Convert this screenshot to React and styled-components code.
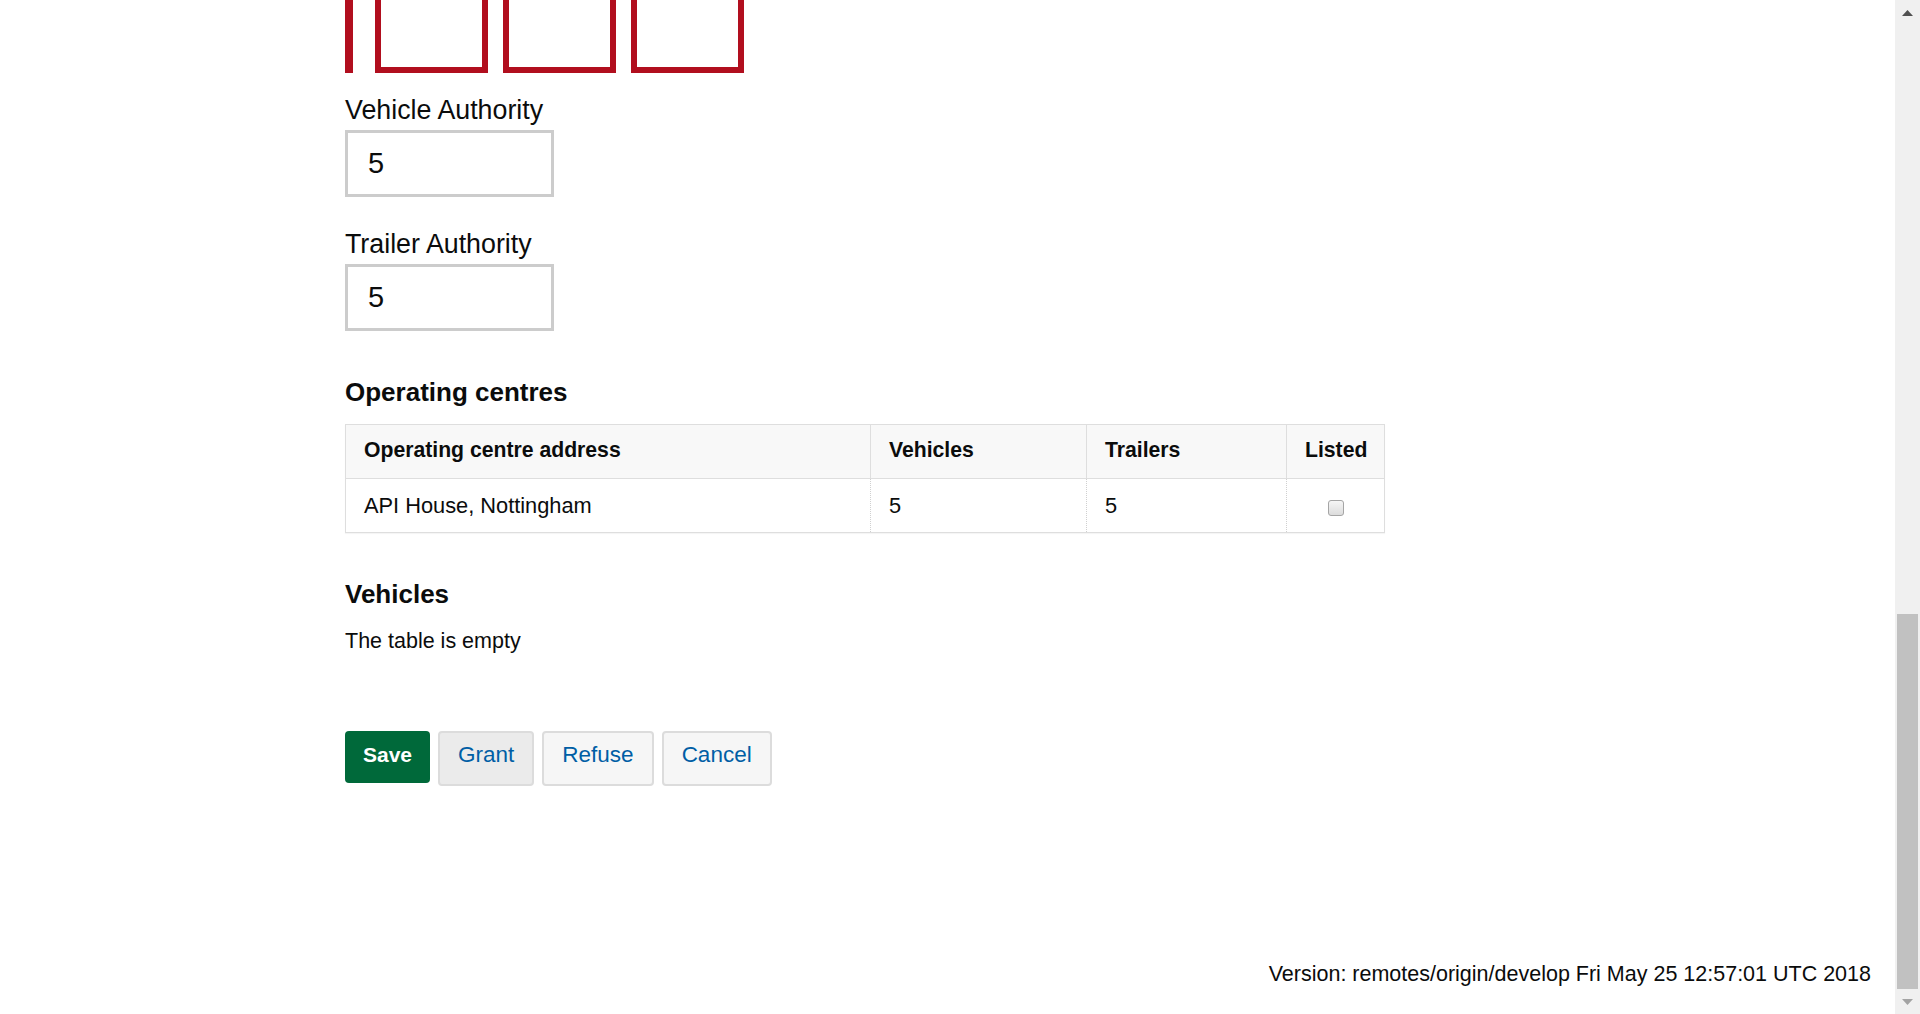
import React from 'react';
import styled, { createGlobalStyle } from 'styled-components';

const GlobalStyle = createGlobalStyle`
  html, body {
    margin: 0;
    padding: 0;
    height: 100%;
    overflow: hidden;
    background: #fff;
  }
  body {
    font-family: "Liberation Sans", Arial, sans-serif;
    color: #0b0c0c;
  }
`;

const centres = [
  { address: 'API House, Nottingham', vehicles: 5, trailers: 5 },
];

export default function App() {
  return (
    <>
      <GlobalStyle />
      <Page>
        <Main>
          <ErrorGroup>
            <CutBox />
            <CutBox />
            <CutBox />
          </ErrorGroup>

          <FormGroup $top={21}>
            <Label htmlFor="vehicle-authority">Vehicle Authority</Label>
            <TextInput id="vehicle-authority" defaultValue="5" />
          </FormGroup>
          <FormGroup $top={31}>
            <Label htmlFor="trailer-authority">Trailer Authority</Label>
            <TextInput id="trailer-authority" defaultValue="5" />
          </FormGroup>

          <Heading $top={45}>Operating centres</Heading>
          <Table>
            <colgroup>
              <col style={{ width: 525 }} />
              <col style={{ width: 216 }} />
              <col style={{ width: 200 }} />
              <col style={{ width: 98 }} />
            </colgroup>
            <thead>
              <tr>
                <Th>Operating centre address</Th>
                <Th>Vehicles</Th>
                <Th>Trailers</Th>
                <Th>Listed</Th>
              </tr>
            </thead>
            <tbody>
              {centres.map((c) => (
                <tr key={c.address}>
                  <Td>{c.address}</Td>
                  <Td>{c.vehicles}</Td>
                  <Td>{c.trailers}</Td>
                  <Td $center>
                    <Checkbox type="checkbox" readOnly />
                  </Td>
                </tr>
              ))}
            </tbody>
          </Table>

          <Heading $top={45}>Vehicles</Heading>
          <Empty>The table is empty</Empty>

          <Actions>
            <PrimaryButton>Save</PrimaryButton>
            <SecondaryButton $active>Grant</SecondaryButton>
            <SecondaryButton>Refuse</SecondaryButton>
            <SecondaryButton>Cancel</SecondaryButton>
          </Actions>

          <Footer>Version: remotes/origin/develop Fri May 25 12:57:01 UTC 2018</Footer>
        </Main>

        <Scrollbar>
          <ScrollArrow>
            <svg width="11" height="6" viewBox="0 0 11 6">
              <polygon points="5.5,0 11,6 0,6" fill="#505050" />
            </svg>
          </ScrollArrow>
          <Track>
            <Thumb />
          </Track>
          <ScrollArrow>
            <svg width="11" height="6" viewBox="0 0 11 6">
              <polygon points="0,0 11,0 5.5,6" fill="#a3a3a3" />
            </svg>
          </ScrollArrow>
        </Scrollbar>
      </Page>
    </>
  );
}

const Page = styled.div`
  display: flex;
  height: 1014px;
`;

const Main = styled.main`
  flex: 1;
  min-width: 0;
  display: flex;
  flex-direction: column;
  padding-left: 345px;
`;

/* error group, scrolled so only the bottom of the inputs shows */
const ErrorGroup = styled.div`
  display: flex;
  gap: 15px;
  width: fit-content;
  height: 73px;
  box-sizing: border-box;
  border-left: 8px solid #b10e1e;
  padding-left: 22px;
`;

const CutBox = styled.div`
  width: 113px;
  height: 73px;
  box-sizing: border-box;
  border: 6px solid #b10e1e;
  border-top: none;
`;

const FormGroup = styled.div`
  margin-top: ${(p) => p.$top}px;
`;

const Label = styled.label`
  display: block;
  font-size: 26.8px;
  line-height: 32px;
  margin-bottom: 4px;
`;

const TextInput = styled.input`
  display: block;
  width: 209px;
  height: 67px;
  box-sizing: border-box;
  border: 3px solid #cccccc;
  border-radius: 0;
  padding: 0 20px;
  font-family: "Liberation Sans", Arial, sans-serif;
  font-size: 29px;
  color: #0b0c0c;
  background: #fff;
  outline: none;
`;

const Heading = styled.h2`
  margin: ${(p) => p.$top}px 0 16px;
  font-size: 26px;
  line-height: 32px;
  font-weight: 700;
`;

const Table = styled.table`
  width: 1039px;
  table-layout: fixed;
  border-collapse: collapse;
  border: 1px solid #dedede;
  box-shadow: 0 1px 1px rgba(0, 0, 0, 0.04);
`;

const Th = styled.th`
  background: #f8f8f8;
  text-align: left;
  font-size: 21.2px;
  line-height: 23px;
  font-weight: 700;
  padding: 13px 18px 17px;
  border: 1px solid #dedede;
`;

const Td = styled.td`
  font-size: 21.8px;
  line-height: 23px;
  padding: 15px 18px;
  text-align: ${(p) => (p.$center ? 'center' : 'left')};
  border-top: 1px solid #dedede;
  border-right: 1px dotted #d0d0d0;
`;

const Checkbox = styled.input`
  appearance: none;
  display: block;
  width: 16px;
  height: 16px;
  margin: 6px auto 1px;
  box-sizing: border-box;
  border: 1px solid #a5a5a5;
  border-radius: 3px;
  background: linear-gradient(#f6f6f6, #dcdcdc);
`;

const Empty = styled.p`
  margin: 0;
  font-size: 21.5px;
  line-height: 30px;
`;

const Actions = styled.div`
  display: flex;
  align-items: flex-start;
  gap: 8px;
  margin-top: 75px;
`;

const PrimaryButton = styled.button`
  height: 52px;
  box-sizing: border-box;
  padding: 12px 18px 16px;
  border: none;
  border-radius: 4px;
  background: #00693a;
  color: #fff;
  font-family: "Liberation Sans", Arial, sans-serif;
  font-size: 21px;
  line-height: 24px;
  font-weight: 700;
`;

const SecondaryButton = styled.button`
  height: 55px;
  box-sizing: border-box;
  padding: 10px 18px 17px;
  border: 2px solid #dcdcdc;
  border-radius: 4px;
  background: ${(p) => (p.$active ? '#ebebeb' : '#f6f6f6')};
  color: #005ea5;
  font-family: "Liberation Sans", Arial, sans-serif;
  font-size: 22.5px;
  line-height: 24px;
`;

const Footer = styled.footer`
  margin-top: auto;
  padding: 0 24px 25px 0;
  text-align: right;
  font-size: 21.5px;
  line-height: 30px;
`;

const Scrollbar = styled.div`
  width: 25px;
  flex-shrink: 0;
  display: flex;
  flex-direction: column;
  background: #f0f0f0;
`;

const ScrollArrow = styled.div`
  height: 25px;
  display: flex;
  align-items: center;
  justify-content: center;
`;

const Track = styled.div`
  flex: 1;
  display: flex;
  flex-direction: column;
  justify-content: flex-end;
  padding: 0 2px;
`;

const Thumb = styled.div`
  height: 375px;
  background: #c1c1c1;
`;
